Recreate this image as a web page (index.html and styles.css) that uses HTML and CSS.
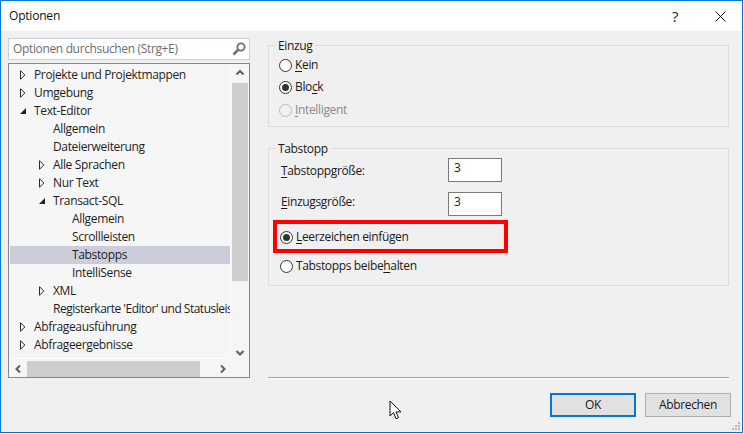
FILE: index.html
```html
<!DOCTYPE html>
<html lang="de">
<head>
<meta charset="utf-8">
<title>Optionen</title>
<link rel="stylesheet" href="styles.css">
</head>
<body>
<svg class="defs" width="0" height="0">
  <symbol id="closed" viewBox="0 0 6 10"><path d="M.5.7v8.600l4.300-4.300z" fill="#f6f6f6" stroke="#2a2a2a"/></symbol>
  <symbol id="opened" viewBox="0 0 6 10"><path d="M0 8h6V2z" fill="#222"/></symbol>
</svg>
<div class="window">
  <header class="titlebar">
    <span class="title">Optionen</span>
    <span class="help">?</span>
    <svg class="close" width="11" height="11" viewBox="0 0 11 11"><path d="M.5.5l10 10M10.500.5l-10 10" stroke="#111" fill="none"/></svg>
  </header>
  <main class="main">
    <section class="left">
      <div class="search">
        <span class="search-text">Optionen durchsuchen (Strg+E)</span>
        <svg class="search-icon" width="14" height="14" viewBox="0 0 14 14"><circle cx="9" cy="5" r="3.600" fill="none" stroke="#6f6f6f" stroke-width="1.800"/><path d="M6.300 7.700L1.500 12.500" stroke="#6f6f6f" stroke-width="2.600"/></svg>
      </div>
      <div class="tree">
        <div class="tree-body">
          <ul class="rows">
            <li class="row d0"><svg class="arrow"><use href="#closed"/></svg>Projekte und Projektmappen</li>
            <li class="row d0"><svg class="arrow"><use href="#closed"/></svg>Umgebung</li>
            <li class="row d0"><svg class="arrow"><use href="#opened"/></svg>Text-Editor</li>
            <li class="row d1"><span class="arrow"></span>Allgemein</li>
            <li class="row d1"><span class="arrow"></span>Dateierweiterung</li>
            <li class="row d1"><svg class="arrow"><use href="#closed"/></svg>Alle Sprachen</li>
            <li class="row d1"><svg class="arrow"><use href="#closed"/></svg>Nur Text</li>
            <li class="row d1"><svg class="arrow"><use href="#opened"/></svg>Transact-SQL</li>
            <li class="row d2"><span class="arrow"></span>Allgemein</li>
            <li class="row d2"><span class="arrow"></span>Scrollleisten</li>
            <li class="row d2 selected"><span class="arrow"></span>Tabstopps</li>
            <li class="row d2"><span class="arrow"></span>IntelliSense</li>
            <li class="row d1"><svg class="arrow"><use href="#closed"/></svg>XML</li>
            <li class="row d1 tight"><span class="arrow"></span>Registerkarte 'Editor' und Statusleiste</li>
            <li class="row d0"><svg class="arrow"><use href="#closed"/></svg>Abfrageausführung</li>
            <li class="row d0"><svg class="arrow"><use href="#closed"/></svg>Abfrageergebnisse</li>
            <li class="row d0"><svg class="arrow"><use href="#closed"/></svg>Designer</li>
          </ul>
          <div class="vscroll">
            <svg class="sb-btn" width="16" height="17" viewBox="0 0 16 17"><path d="M4.500 10.500L8 7l3.500 3.500" fill="none" stroke="#606060" stroke-width="2"/></svg>
            <div class="vtrack"><div class="vthumb"></div></div>
            <svg class="sb-btn" width="16" height="17" viewBox="0 0 16 17"><path d="M4.500 7L8 10.500 11.500 7" fill="none" stroke="#606060" stroke-width="2"/></svg>
          </div>
        </div>
        <div class="hscroll">
          <svg class="sb-btn" width="17" height="16" viewBox="0 0 17 16"><path d="M10 4.500L6.500 8l3.500 3.500" fill="none" stroke="#606060" stroke-width="2"/></svg>
          <div class="htrack"><div class="hthumb"></div></div>
          <svg class="sb-btn" width="17" height="16" viewBox="0 0 17 16"><path d="M7 4.500L10.500 8 7 11.500" fill="none" stroke="#606060" stroke-width="2"/></svg>
        </div>
      </div>
    </section>
    <section class="right">
      <div class="group group-indent">
        <span class="legend">Einzug</span>
        <label class="radio"><i class="dot"></i><span><u>K</u>ein</span></label>
        <label class="radio r-block"><i class="dot on"></i><span>Blo<u>c</u>k</span></label>
        <label class="radio r-smart disabled"><i class="dot"></i><span><u>I</u>ntelligent</span></label>
      </div>
      <div class="group group-tab">
        <span class="legend">Tabstopp</span>
        <div class="field"><span class="field-label label-first"><u>T</u>abstoppgröße:</span><span class="input">3</span></div>
        <div class="field f-second"><span class="field-label label-second"><u>E</u>inzugsgröße:</span><span class="input">3</span></div>
        <label class="radio r-insert"><i class="dot on"></i><span><u>L</u>eerzeichen einfügen</span></label>
        <label class="radio r-keep"><i class="dot"></i><span>Tabstopps beibe<u>h</u>alten</span></label>
      </div>
    </section>
  </main>
  <div class="rule"></div>
  <footer class="footer">
    <button class="btn primary">OK</button>
    <button class="btn">Abbrechen</button>
  </footer>
  <svg class="grip" width="10" height="10" viewBox="0 0 10 10"><path d="M7 1h2v2H7zM4 4h2v2H4zM7 4h2v2H7zM1 7h2v2H1zM4 7h2v2H4zM7 7h2v2H7z" fill="#b8b8b8"/></svg>
  <div class="highlight"></div>
  <svg class="cursor" width="14" height="21" viewBox="0 0 14 21"><path d="M1 1v15l3.500-3.300 2.500 6 2.500-1-2.500-5.800h5z" fill="#fff" stroke="#111" stroke-linejoin="round"/></svg>
</div>
</body>
</html>
```
FILE: styles.css
```css
* { box-sizing: border-box; }
html, body { margin: 0; padding: 0; background: #fff; }
body { width: 744px; height: 434px; overflow: hidden; font: 12px/18px "Open Sans", "Noto Sans", sans-serif; letter-spacing: -0.35px; color: #1a1a1a; }
ul { list-style: none; margin: 0; padding: 0; }
u { text-decoration-thickness: 1px; text-underline-offset: 2px; }
.defs { position: absolute; }

.window { position: relative; width: 743px; height: 433px; border: 1px solid #0078d7; background: #f0f0f0; display: flex; flex-direction: column; }

.titlebar { height: 30px; flex: none; background: #fff; display: flex; align-items: center; padding: 0 16px 0 8px; }
.title { color: #111; flex: 1; letter-spacing: -0.2px; }
.help { font-size: 15px; margin-right: 37px; color: #222; }

.main { flex: none; height: 346px; display: flex; }
.left { width: 242px; margin-left: 7px; padding-top: 7px; flex: none; }
.search { height: 22px; background: #fff; border: 1px solid #ccced8; display: flex; align-items: center; justify-content: space-between; padding: 0 3px 0 4px; color: #6d6d6d; }
.tree { margin-top: 3px; height: 315px; border: 1px solid #828790; background: #f5f5f5; display: flex; flex-direction: column; }
.tree-body { flex: none; height: 297px; display: flex; padding-left: 1px; }
.rows { width: 221px; flex: none; height: 295px; padding-top: 2px; overflow: hidden; background: #f6f6f6; border-bottom: 1px solid #fff; border-right: 1px solid #fff; }
.row { height: 18px; white-space: nowrap; overflow: hidden; color: #1e1e1e; display: flex; align-items: center; }
.d0 { padding-left: 10px; }
.d1 { padding-left: 29px; }
.d2 { padding-left: 48px; }
.tight { letter-spacing: -0.5px; }
.selected { background: #cbcdda; }
.arrow { width: 6px; height: 10px; margin-right: 8px; flex: none; }

.vscroll { width: 16px; margin-left: 1px; display: flex; flex-direction: column; }
.sb-btn { display: block; flex: none; }
.vtrack { flex: 1; padding-top: 2px; }
.vthumb { height: 198px; background: #cdcdcd; }
.hscroll { height: 16px; display: flex; padding-left: 1px; }
.htrack { width: 187px; flex: none; }
.hthumb { width: 173px; height: 16px; background: #cdcdcd; }

.right { margin-left: 18px; width: 461px; flex: none; padding-top: 14px; }
.group { position: relative; border: 1px solid #dcdcdc; display: flex; flex-direction: column; align-items: flex-start; }
.group-indent { height: 82px; padding: 10px 0 0 10px; }
.group-tab { height: 138px; margin-top: 21px; padding: 9px 0 0 11px; }
.legend { position: absolute; left: 7px; top: -9px; padding: 0 2px; background: #f0f0f0; }
.radio { display: flex; align-items: center; gap: 3px; height: 18px; color: #1a1a1a; }
.dot { width: 13px; height: 13px; border: 1px solid #333; border-radius: 50%; background: #fff; flex: none; position: relative; }
.dot.on::after { content: ""; position: absolute; left: 2px; top: 2px; width: 7px; height: 7px; background: #333; border-radius: 50%; }
.disabled { color: #8a8a8a; }
.disabled .dot { border-color: #bcbcbc; background: #f0f0f0; }
.r-block { margin-top: 4px; }
.r-smart { margin-top: 5px; }
.r-insert { margin-top: 12px; }
.r-keep { margin-top: 11px; }

.field { width: 222px; padding-left: 1px; display: flex; justify-content: space-between; align-items: center; }
.f-second { margin-top: 10px; }
.label-first { margin-top: 2px; }
.label-second { margin-top: -4px; }
.input { width: 54px; height: 24px; border: 1px solid #7a7a7a; background: #fff; padding: 0 5px; line-height: 18px; }

.rule { margin: 0 13px 0 267px; height: 2px; border-top: 1px solid #a0a0a0; border-bottom: 1px solid #fff; flex: none; }
.footer { flex: 1; display: flex; justify-content: flex-end; gap: 9px; padding: 14px 11px 0 0; }
.btn { width: 86px; height: 24px; border: 1px solid #adadad; background: #e1e1e1; font: inherit; letter-spacing: inherit; color: #1a1a1a; padding: 0; }
.primary { border: 2px solid #0078d7; }

.grip { position: absolute; right: 1px; bottom: 1px; }
.highlight { position: absolute; left: 272px; top: 219px; width: 235px; height: 33px; border: 4px solid #f00; }
.cursor { position: absolute; left: 388px; top: 399px; }
```
